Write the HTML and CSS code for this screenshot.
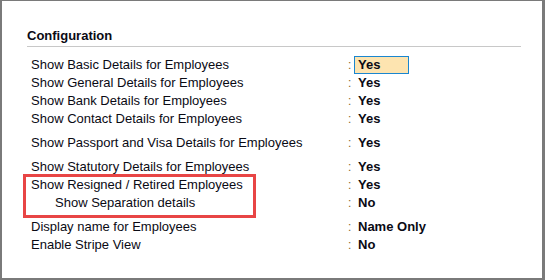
FILE: index.html
```html
<!DOCTYPE html>
<html>
<head>
<meta charset="utf-8">
<link rel="stylesheet" href="styles.css">
</head>
<body>
<div class="frame">
  <div class="panel">
    <div class="title">Configuration</div>
    <div class="rows">
      <div class="row"><span class="label">Show Basic Details for Employees</span><span class="colon">:</span><span class="value active">Yes</span></div>
      <div class="row"><span class="label">Show General Details for Employees</span><span class="colon">:</span><span class="value">Yes</span></div>
      <div class="row"><span class="label">Show Bank Details for Employees</span><span class="colon">:</span><span class="value">Yes</span></div>
      <div class="row"><span class="label">Show Contact Details for Employees</span><span class="colon">:</span><span class="value">Yes</span></div>
      <div class="row gap"><span class="label">Show Passport and Visa Details for Employees</span><span class="colon">:</span><span class="value">Yes</span></div>
      <div class="row gap"><span class="label">Show Statutory Details for Employees</span><span class="colon">:</span><span class="value">Yes</span></div>
      <div class="highlight-group">
        <div class="row"><span class="label">Show Resigned / Retired Employees</span><span class="colon">:</span><span class="value">Yes</span></div>
        <div class="row"><span class="label indent">Show Separation details</span><span class="colon">:</span><span class="value">No</span></div>
        <div class="redbox"></div>
      </div>
      <div class="row gap"><span class="label">Display name for Employees</span><span class="colon">:</span><span class="value">Name Only</span></div>
      <div class="row"><span class="label">Enable Stripe View</span><span class="colon">:</span><span class="value">No</span></div>
    </div>
  </div>
</div>
</body>
</html>
```
FILE: styles.css
```css
* { box-sizing: border-box; }
html, body { margin: 0; padding: 0; background: #fff; }
body {
  font-family: "Liberation Sans", Arial, sans-serif;
  font-size: 13px;
  color: #0a0a14;
}
.frame {
  width: 545px;
  height: 280px;
  border-left: 2px solid #7a7a7a;
  border-top: 1px solid #7a7a7a;
  border-right: 3px solid #7a7a7a;
  border-bottom: 2px solid #7a7a7a;
  background: #fff;
  overflow: hidden;
}
.panel {
  padding: 26px 21px 0 25px;
}
.title {
  font-weight: bold;
  font-size: 13px;
  line-height: 17px;
  padding-bottom: 2px;
  border-bottom: 1px solid #c8c8c8;
  width: 494px;
}
.rows {
  padding-top: 9px;
  padding-left: 4px;
}
.row {
  display: grid;
  grid-template-columns: 317px 6px auto;
  height: 18px;
  line-height: 18px;
  align-items: center;
}
.row.gap { margin-top: 6px; }
.label { white-space: nowrap; }
.label.indent { padding-left: 24px; }
.colon {
  color: #8a6a2a;
  font-size: 12px;
}
.value {
  font-weight: bold;
  justify-self: start;
  height: 18px;
  line-height: 16px;
  padding: 0 4px 0 3px;
  border: 1px solid transparent;
}
.value.active {
  background: #fde4b0;
  border-color: #1a86cf;
  width: 55px;
}
.highlight-group {
  position: relative;
}
.redbox {
  position: absolute;
  left: -8px;
  top: -2px;
  width: 233px;
  height: 44px;
  border: 3px solid #e84545;
  pointer-events: none;
}
```
